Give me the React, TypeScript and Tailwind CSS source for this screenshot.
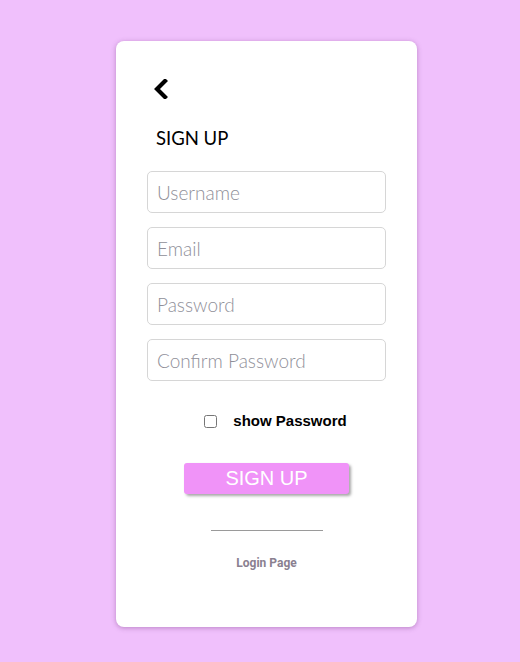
import { useState } from "react"

const fields = ["Username", "Email", "Password", "Confirm Password"]

export default function App() {
  const [show, setShow] = useState(false)

  return (
    <div className="min-h-[662px] w-full bg-[#f0c0fc] pt-[41px] pl-[116px]">
      <div className="w-[301px] h-[586px] bg-white rounded-[8px] shadow-[0_1px_5px_rgba(120,60,130,0.45)] flex flex-col items-center">
        <div className="self-start ml-[36px] pt-[38px]">
          <svg width="17" height="20" viewBox="0 0 17 20">
            <path d="M13 2 L5 10 L13 18" fill="none" stroke="black" strokeWidth="4.2" strokeLinecap="square" />
          </svg>
        </div>
        <h1 className="self-start ml-[40px] mt-[27px] text-[18.5px] leading-[24px] text-black font-['Lato',sans-serif]">
          SIGN UP
        </h1>
        <div className="mt-[21px] flex flex-col gap-[14px]">
          {fields.map((f) => (
            <input
              key={f}
              type={f.includes("Password") && !show ? "password" : "text"}
              placeholder={f}
              className="w-[239px] h-[42px] rounded-[5px] border border-[#d6d6d6] px-[9px] text-[19px] font-light font-['Lato',sans-serif] placeholder:text-[#8f8f99] outline-none"
            />
          ))}
        </div>
        <label className="mt-[29px] ml-[18px] flex items-center gap-[16px] font-['Liberation_Sans',sans-serif] font-bold text-[15px] text-black">
          <input type="checkbox" checked={show} onChange={() => setShow(!show)} className="w-[13px] h-[13px]" />
          show Password
        </label>
        <button className="mt-[30px] w-[165px] h-[31px] rounded-[3px] bg-[#f093f8] text-white text-[20px] font-['Liberation_Sans',sans-serif] shadow-[2px_2px_3px_rgba(0,0,0,0.35)]">
          SIGN UP
        </button>
        <div className="mt-[36px] w-[112px] h-px bg-[#9a9a9a]" />
        <a className="mt-[23px] text-[12px] font-bold text-[#8a8090] font-['Roboto',sans-serif]">Login Page</a>
      </div>
    </div>
  )
}
